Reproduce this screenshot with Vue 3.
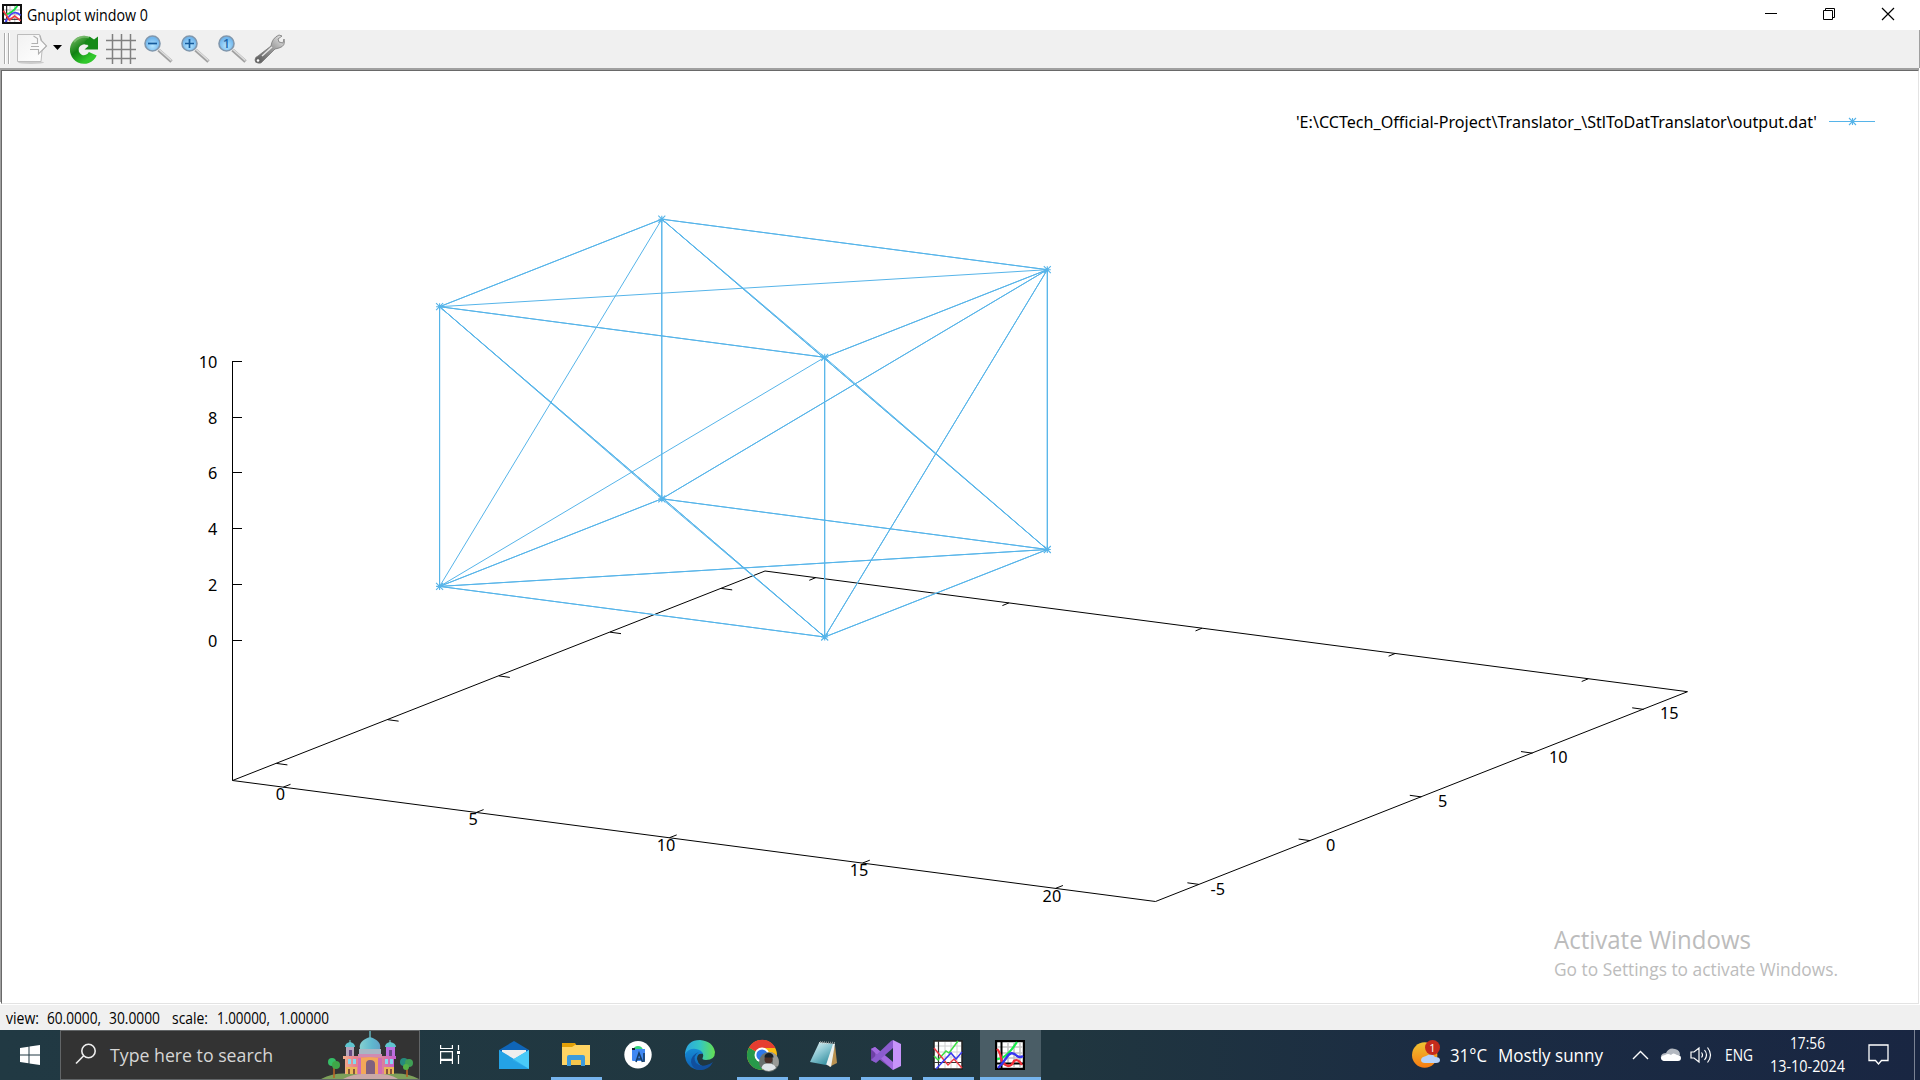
<script setup>
import { h } from 'vue'

// Single-line label with a fixed width; `base` is the baseline inside the box.
const Label = (p) =>
  h('svg', { width: p.w, height: p.h, class: 'label', style: { display: 'block', overflow: 'visible', flex: 'none' } }, [
    h('text', { x: 0, y: p.base, 'font-size': p.size, textLength: p.w, lengthAdjust: 'spacingAndGlyphs', fill: p.fill || '#000' }, p.text),
  ])
Label.props = ['w', 'h', 'base', 'size', 'fill', 'text']

const V = {
  L: [439.6, 306.7], B: [661.8, 219.2], R: [1047.3, 269.7], F: [824.7, 357.3],
  l: [439.6, 586.4], b: [661.8, 498.8], r: [1047.3, 549.5], f: [824.7, 637],
}
const twice = ['LB', 'BR', 'LF', 'RF', 'lb', 'br', 'lf', 'rf', 'lr', 'Ll', 'Bb', 'Rr', 'Ff', 'bR', 'Rf', 'Lf', 'Br']
const once = ['LR', 'Bl', 'lF', 'Lb', 'bf', 'BF', 'Fr']
const edges = [...twice, ...twice, ...once].map((e) => ({ a: V[e[0]], b: V[e[1]] }))
const stars = [...Object.values(V), [1852.5, 121.5]]

const zTicks = [[361.5, '10'], [417.5, '8'], [472.5, '6'], [528.5, '4'], [584.5, '2'], [640.5, '0']]
const xTicks = [0, 1, 2, 3, 4].map((i) => ({
  x: 283.3 + 193.1 * i, y: 787.1 + 25.3 * i, t: String(i * 5), lx: 280.3 + 192.9 * i, ly: 800 + 25.4 * i,
}))
const yTicks = [0, 1, 2, 3, 4].map((i) => ({
  x: 276.4 + 111.2 * i, y: 763.4 - 43.75 * i, t: String(i * 5 - 5), ly: 895.2 - 44 * i,
  lx: [1210.5, 1326, 1438, 1549, 1660][i],
}))
const status = [
  ['view:', 33, 8], ['60.0000,', 54, 8], ['30.0000', 51, 12], ['scale:', 36, 9], ['1.00000,', 53, 9], ['1.00000', 50, 0],
]
</script>

<template>
  <div class="screen">
    <header class="titlebar">
      <svg class="appicon" width="20" height="20" viewBox="0 0 30 30">
        <rect x="1.5" y="1.5" width="27" height="27" fill="#fff" stroke="#111" stroke-width="3" />
        <path d="M12 3v24M19 3v24M3 9h24M3 16h24" stroke="#ccc" stroke-width="2" />
        <path d="M7 2v26M2 23h26" stroke="#111" stroke-width="1.6" />
        <path d="M3 15Q13 17 23 3" stroke="#18dc48" stroke-width="3" fill="none" />
        <path d="M5 27Q17 5 28 17" stroke="#4545f5" stroke-width="2.6" fill="none" />
        <path d="M2 10L11 24L19 18L28 25" stroke="#f23a44" stroke-width="2.6" fill="none" />
      </svg>
      <Label text="Gnuplot window 0" :w="121" :h="30" :base="20.5" :size="16" />
      <div class="grow"></div>
      <svg width="170" height="30" fill="none" stroke="#000">
        <path d="M15 13.5h12M75.500 10.5V8.500h9v9h-2M73.500 10.500h9v9h-9z" />
        <path d="M132 8l12 12M144 8l-12 12" stroke-width="1.2" />
      </svg>
    </header>

    <div class="toolbar">
      <svg width="300" height="38" viewBox="0 30 300 38">
        <defs>
          <linearGradient id="pg" x1="0" y1="0" x2="1" y2="1"><stop offset="0" stop-color="#f2f2f2" /><stop offset="1" stop-color="#fff" /></linearGradient>
          <linearGradient id="gr" x1="0" y1="0" x2=".7" y2="1"><stop offset="0" stop-color="#5dab50" /><stop offset=".45" stop-color="#118113" /><stop offset="1" stop-color="#31c82c" /></linearGradient>
          <radialGradient id="gl" cy=".65"><stop offset="0" stop-color="#b5e5ff" /><stop offset="1" stop-color="#72b7ed" /></radialGradient>
          <linearGradient id="wr" x1="1" y1="0" x2="0" y2="1"><stop offset="0" stop-color="#eee" /><stop offset=".45" stop-color="#999" /><stop offset="1" stop-color="#555" /></linearGradient>
        </defs>
        <path d="M4.500 33v31M8.500 33v31" stroke="#aaa" /><path d="M5.500 33v31M9.500 33v31" stroke="#fff" />
        <ellipse cx="31" cy="62.500" rx="13" ry="1.500" fill="#ccc" />
        <path d="M17.500 34.500h22l1.500 6 5.500 5.500-4.500 5-1 10.500h-23.500z" fill="url(#pg)" stroke="#bcbcbc" />
        <path d="M31.500 43.500h6v-5l-4-2.500M40 35.500l1.500 5 5 5.500-8 8v-4.500h-8.500M31 46.500h8" fill="none" stroke="#b0b0b0" stroke-width="1.100" />
        <path d="M53 45h9l-4.500 5z" />
        <path d="M92.800 53.800A9.700 9.700 0 1 1 88.500 41.200" fill="none" stroke="url(#gr)" stroke-width="8.600" />
        <path d="M98 36.500V49.500H84.500l4-3.500-4-4 5-5.500 4.500 3z" fill="#158a18" />
        <path d="M74 42q6-7 15-4.500" stroke="#9ccf90" fill="none" stroke-width="2" opacity=".5" />
        <path d="M112.500 34v30M121.500 34v30M130.500 34v30M106 40.500h30M106 49.500h30M106 58.500h30" stroke="#808080" stroke-width="1.500" fill="none" />
        <g v-for="(x, i) in [152.500, 189.500, 226.500]" :key="x">
          <path :d="`M${x + 6} 50L${x + 19} 61.500`" stroke="#a0a0a0" stroke-width="3.400" />
          <path :d="`M${x + 6.600} 49.500L${x + 19} 60.500`" stroke="#dedede" stroke-width="1.600" />
          <circle :cx="x" cy="43.500" r="7.500" fill="url(#gl)" stroke="#8097ad" stroke-width="1.600" />
          <path v-if="i < 2" :d="`M${x - 4.500} 43.500h9` + (i ? `M${x} 39v9` : '')" stroke="#155a9a" stroke-width="1.700" />
          <text v-else :x="x" y="48" text-anchor="middle" font-size="12" font-weight="600" fill="#1b65a8">1</text>
        </g>
        <path d="M255 60q0-3 3-4l13-10q1-8 8-11l3 1-4 3 1 3 4 1 1-4q2 7-5 9l-4 1-12 12q-2 3-5 2-3 0-3-3z" fill="url(#wr)" stroke="#777" stroke-width=".8" />
        <path d="M262 56l10-9" stroke="#e5e5e5" stroke-width="1.500" /><circle cx="258" cy="60.500" r="1.300" fill="#fff" />
      </svg>
    </div>

    <main class="plot">
      <svg width="1916" height="932" viewBox="2 71 1916 932">
        <g class="axes" fill="none" stroke="#000">
          <path d="M232.500 361V780.500" />
          <path d="M232.500 780.500L1155.500 901.500L1687.500 691.700L765 571Z" />
          <path v-for="z in zTicks" :key="z[0]" :d="`M232 ${z[0]}h10`" />
          <template v-for="t in xTicks" :key="t.t">
            <path :d="`M${t.x} ${t.y}l7.200-2.800`" />
            <path :d="`M${t.x + 532.500} ${t.y - 209.500}l-6.500 2.700`" />
          </template>
          <template v-for="t in yTicks" :key="t.t">
            <path :d="`M${t.x} ${t.y}l11 1.500`" />
            <path :d="`M${t.x + 922.500} ${t.y + 121}l-11.500-1.600`" />
          </template>
        </g>
        <g class="ticks">
          <text v-for="z in zTicks" :key="z[1]" :x="217.300" :y="z[0] + 6.800" text-anchor="end">{{ z[1] }}</text>
          <text v-for="t in xTicks" :key="t.t" :x="t.lx" :y="t.ly" text-anchor="middle">{{ t.t }}</text>
          <text v-for="t in yTicks" :key="t.t" :x="t.lx" :y="t.ly">{{ t.t }}</text>
          <text x="1296" y="128" font-size="16.500" textLength="521" lengthAdjust="spacingAndGlyphs">'E:\CCTech_Official-Project\Translator_\StlToDatTranslator\output.dat'</text>
        </g>
        <g stroke="#56b4e9" stroke-width="1" fill="none">
          <line v-for="(e, i) in edges" :key="i" :x1="e.a[0]" :y1="e.a[1]" :x2="e.b[0]" :y2="e.b[1]" />
          <path d="M1829 121.500h46" />
          <path v-for="(s, i) in stars" :key="i" stroke-width="1.100" :d="`M${s[0] - 3.500} ${s[1]}h7m-3.500-3.500v7m-3.500-7l7 7m0-7l-7 7`" />
        </g>
        <g class="watermark">
          <text x="1554" y="948.500" font-size="25" textLength="197" lengthAdjust="spacingAndGlyphs">Activate Windows</text>
          <text x="1554" y="975.700" font-size="18.500" textLength="284" lengthAdjust="spacingAndGlyphs">Go to Settings to activate Windows.</text>
        </g>
      </svg>
    </main>

    <div class="status">
      <div v-for="(s, i) in status" :key="i" :style="{ marginRight: s[2] + 'px' }">
        <Label :text="s[0]" :w="s[1]" :h="25" :base="19.3" :size="15.500" />
      </div>
    </div>

    <footer class="taskbar">
      <div class="start"><svg width="20" height="20" fill="#fff"><path d="M0 3l8.500-1.200v7.700H0zM9.500 1.600L20 0v9.500H9.500zM0 10.500h8.500v7.700L0 17zM9.500 10.500H20V20L9.500 18.400z" /></svg></div>
      <div class="search">
        <svg class="glass" width="22" height="22" fill="none" stroke="#eee" stroke-width="1.600"><circle cx="13.500" cy="8" r="6.700" /><path d="M8.700 12.800L1 20.500" /></svg>
        <Label text="Type here to search" :w="163" :h="48" :base="31" :size="19" fill="#d6d6d6" />
        <div class="grow"></div>
        <svg width="98" height="48" viewBox="0 0 98 48">
          <defs>
            <linearGradient id="pal"><stop offset="0" stop-color="#f4b08a" /><stop offset=".25" stop-color="#e57c93" /><stop offset=".5" stop-color="#f1a45e" /><stop offset="1" stop-color="#c45ad8" /></linearGradient>
            <linearGradient id="dom"><stop offset="0" stop-color="#86d0d0" /><stop offset=".6" stop-color="#5fb8cf" /><stop offset="1" stop-color="#62a3c6" /></linearGradient>
          </defs>
          <path d="M0 48q14-7 30-5h38q16-2 30 5z" fill="#7da05a" />
          <path d="M22 25h53v3h-2v15H24V28h-2z" fill="url(#pal)" />
          <path d="M38 18h22v8H38z" fill="#a8b6c4" /><path d="M37 23h24v3H37z" fill="#d08bb2" />
          <path d="M39 18q-2-8 10-12q12 4 10 12z" fill="url(#dom)" /><path d="M49 0v7" stroke="#63b3bb" stroke-width="1.500" />
          <path d="M25 16h8v9h-8z" fill="#b7a5bd" /><path d="M65 16h9v9h-9z" fill="#bb6fe0" />
          <path d="M24 16q0-4 5-5q5 1 5 5zM64 16q0-4 5-5q6 1 6 5z" fill="#5fc5cf" /><path d="M29 9v3M69 9v3" stroke="#6cc" />
          <path d="M28 19h3v6h-3zM68 19h3v6h-3z" fill="#684b83" />
          <path d="M40 27h20v17H40z" fill="#f3a859" /><path d="M57 27h4v16h-4zM37 27h3v16h-3z" fill="#cf6cb4" />
          <path d="M45 44V33q0-4 4-4q5 0 5 4v11z" fill="#80617f" />
          <path d="M27 28h3v5h-3zM32 28h3v5h-3zM64 28h3v5h-3zM69 28h3v5h-3z" fill="#86d8ee" />
          <path d="M25 36h11v7H25zM63 36h10v7H63z" fill="#e9b758" /><path d="M27 38h2v5h-2zM32 38h2v5h-2zM65 38h2v5h-2zM69 38h2v5h-2z" fill="#87533c" />
          <path d="M22 48q10-5 19-5h18q10 0 18 5z" fill="#cba9a8" />
          <path d="M13 36v11M86 36v10" stroke="#b86525" stroke-width="1.600" />
          <circle cx="11" cy="31" r="4" fill="#36bd67" /><circle cx="15" cy="34" r="4" fill="#3fa648" />
          <circle cx="83" cy="31" r="4" fill="#268b7d" /><circle cx="88" cy="32" r="4" fill="#3f9f55" /><circle cx="85" cy="36" r="3" fill="#56b146" />
        </svg>
      </div>

      <div class="task view">
        <svg width="22" height="22" fill="none" stroke="#fff" stroke-width="1.200"><path d="M1.600 1v3.500h11.800V1M1.600 7.600h11.800v7.800H1.600zM1.600 20v-3.500h11.800V20M19.500 1v5M19.500 11v9" /><path d="M18 7h3v3h-3z" fill="#fff" stroke="none" /></svg>
      </div>
      <div class="task">
        <svg width="30" height="30">
          <path d="M0 10L15 1L30 10V16H0z" fill="#0f65b8" /><path d="M3 10h24v5L15 20L3 15z" fill="#eee" />
          <path d="M0 10l15 9L30 10v19H0z" fill="#2aa7e9" /><path d="M30 10L13 20L30 29z" fill="#49caf8" /><path d="M0 10L30 29H0z" fill="#229fe2" opacity=".7" />
        </svg>
      </div>
      <div class="task open">
        <svg width="30" height="30">
          <path d="M1 3h13l2 3v5H1z" fill="#e3a007" /><path d="M1 7h10l3-2h15v20H1z" fill="#ffd463" />
          <path d="M6 26V17q0-2 2-2h14q2 0 2 2v9h-4v-6H10v6z" fill="#3d9bdc" /><path d="M10 20h10v5H10z" fill="#f5c64d" />
        </svg>
      </div>
      <div class="task">
        <svg width="30" height="30">
          <circle cx="15" cy="14.700" r="13.700" fill="#fff" /><path d="M10 10q1-4 5-4t5 4z" fill="#35d47c" />
          <path d="M9 9h13v11q0 1-1 1H10q-1 0-1-1z" fill="#4088f2" />
          <path d="M9 8h3v2H9z" fill="#123" /><path d="M13 22L16 13l3.500 9M14 19h4M21 13v9" fill="none" stroke="#173e68" stroke-width="1.600" />
        </svg>
      </div>
      <div class="task">
        <svg width="30" height="30">
          <defs>
            <linearGradient id="ed1"><stop offset="0" stop-color="#2ba5e1" /><stop offset=".5" stop-color="#34c6c3" /><stop offset="1" stop-color="#65df50" /></linearGradient>
            <linearGradient id="ed2" x1="0" y1="0" x2="0" y2="1"><stop offset="0" stop-color="#168bd5" /><stop offset="1" stop-color="#0e5fb3" /></linearGradient>
          </defs>
          <path d="M0 13Q2 0 15 0q13 1 15 12q0 8-9 8q-5 0-3-3q1-3-2-5Q8 7 0 17z" fill="url(#ed1)" />
          <path d="M0 14Q4 8 11 9q6 1 7 5q-6-1-6 5q2 8 10 8l-2 2Q9 32 3 24q-3-4-3-10z" fill="url(#ed2)" />
          <path d="M14 12q-7 4-3 11q6 6 17-1q-4 8-13 8q-8-1-9-8q0-7 8-10z" fill="#114f9d" />
        </svg>
      </div>
      <div class="task open">
        <svg class="chrome" width="30" height="30">
          <circle cx="15" cy="15" r="15" fill="#fbbd12" /><path d="M15 15L2 7.500A15 15 0 0 0 15 30l6-11z" fill="#27994a" />
          <path d="M15 15L2 7.500A15 15 0 0 1 28.500 8H15z" fill="#e63d30" /><circle cx="15" cy="15" r="7.500" fill="#fff" /><circle cx="15" cy="15" r="5.600" fill="#3079e8" />
          <circle cx="22" cy="22" r="10" fill="#69716e" /><path d="M22 12a10 10 0 0 1 9 14l-5 1V15z" fill="#999b97" />
          <circle cx="21.500" cy="19.500" r="4" fill="#4b3029" /><path d="M17.500 17.500q0-4.500 4.500-4.500t4.500 4.500z" fill="#171f28" />
          <path d="M14.500 28q1-5 6.500-4.500 6-.5 8 4.500-7 6-14.500 0z" fill="#dfe5e8" />
        </svg>
      </div>
      <div class="task open">
        <svg width="30" height="30">
          <defs><linearGradient id="np" x1="0" y1="0" x2=".7" y2="1"><stop offset="0" stop-color="#e8f6f8" /><stop offset=".5" stop-color="#8cc7d3" /><stop offset="1" stop-color="#358f9f" /></linearGradient></defs>
          <path d="M26 5l2 18-8 4z" fill="#b99150" /><path d="M10 2l16 2-4 23-8-4z" fill="#edf1ef" />
          <path d="M10 3l14 1-7 21L1 22z" fill="url(#np)" /><path d="M11 2l15 1" stroke="#858f91" stroke-width="2" stroke-dasharray="1 1" />
        </svg>
      </div>
      <div class="task open">
        <svg width="30" height="30">
          <path d="M0 9l4-2 18 15v8L4 16v6l-4-2z" fill="#8454bd" /><path d="M0 9l4-2v15l-4-2z" fill="#6d41a6" />
          <path d="M4 7l19 16-1 7L0 9z" fill="#a36be0" /><path d="M22 0v8L5 23l-5-3L20 1z" fill="#8b5cce" /><path d="M22 0l8 4v22l-8 4z" fill="#c793fa" />
        </svg>
      </div>
      <div class="task open">
        <svg width="30" height="30" fill="none">
          <path d="M1 1h28v28H1z" fill="#fff" stroke="#222" stroke-width="1.500" /><path d="M12 2v26M18 2v26M24 2v26M2 6h26M2 12h26M2 17h26" stroke="#d0d0d0" />
          <path d="M5.500 1v28M1 22.500h28" stroke="#333" stroke-width="1.200" />
          <path d="M1 16l4 4 8-9 3 2 9-12" stroke="#3cdf43" stroke-width="1.500" /><path d="M1 8l14 17 6-6 8 9" stroke="#ed3842" stroke-width="1.500" />
          <path d="M3 29l15-16 5 6 6-7" stroke="#3838ee" stroke-width="1.500" />
        </svg>
      </div>
      <div class="task open active">
        <svg width="30" height="30" fill="none">
          <path d="M1 1h28v28H1z" fill="#fff" stroke="#000" stroke-width="2.400" /><path d="M13 2v26M19 2v26M25 2v26M2 7h26M2 13h26M2 18h26" stroke="#c5c5c5" stroke-width="1.600" />
          <path d="M6.500 1v28M1 23.500h28" stroke="#000" stroke-width="2" />
          <path d="M2 19q9 0 20-17" stroke="#13ed48" stroke-width="2.300" /><path d="M2 9q3 3 4 9t7 8q4 0 6-5 4-3 8 4" stroke="#f22f38" stroke-width="2.300" />
          <path d="M3 28q5-5 9-11q4-7 10-1 3 2 6 0" stroke="#3636f0" stroke-width="2.300" />
        </svg>
      </div>

      <div class="grow"></div>
      <svg class="weather" width="28" height="30">
        <defs><linearGradient id="sun" x1="0" y1="0" x2="0" y2="1"><stop offset="0" stop-color="#efc332" /><stop offset="1" stop-color="#f77b11" /></linearGradient></defs>
        <circle cx="12.700" cy="15" r="12.700" fill="url(#sun)" />
        <path d="M13 23q-4 0-4-3t5-4q6-4 9 1 5 0 5 3t-4 3z" fill="#b6d3fb" />
        <circle cx="20.500" cy="7.500" r="7.500" fill="#c42b1c" /><text x="20.500" y="11.500" text-anchor="middle" font-size="11" fill="#fff">1</text>
      </svg>
      <div class="temp"><Label text="31°C" :w="37" :h="50" :base="31.700" :size="18.500" fill="#fff" /></div>
      <Label text="Mostly sunny" :w="105" :h="50" :base="31.700" :size="18.500" fill="#fff" />
      <svg class="tray" width="80" height="50" fill="none" stroke="#fff">
        <path d="M1 29l7.500-7.500L16 29" stroke-width="1.400" />
        <path d="M32 31q-4-1-3-5 1-3 5-3 3-6 9-4 5 1 5 6z" fill="#b3b8c0" stroke="none" />
        <path d="M32 31q-3-1-3-3.500 1-2.500 4-2.500 3-2 6 0 2-3 6 0 4 0 4 3 0 3-3 3z" fill="#fff" stroke="none" />
        <path d="M59 22h3l5-4v14l-5-4h-3zM69.500 22.500q2 2.500 0 5M72.500 20q4 5 0 10M75.500 17.500q6 7.500 0 15" stroke-width="1.200" />
      </svg>
      <div class="lang"><Label text="ENG" :w="28" :h="50" :base="31" :size="16" fill="#fff" /></div>
      <div class="clock">
        <Label text="17:56" :w="35" :h="23" :base="19.300" :size="16" fill="#fff" />
        <Label text="13-10-2024" :w="75" :h="23" :base="19" :size="16" fill="#fff" />
      </div>
      <svg class="note" width="22" height="22" fill="none" stroke="#fff" stroke-width="1.300"><path d="M1 1h19v15.500h-6.500L10.500 20L7.500 16.500H1z" /></svg>
      <div class="peek"></div>
    </footer>
  </div>
</template>

<style>
body { margin: 0; overflow: hidden; }
</style>

<style scoped>
.screen { width: 1920px; height: 1080px; display: flex; flex-direction: column; background: #fff; font-family: "Open Sans", "Noto Sans", sans-serif; overflow: hidden; }
.grow { flex: 1; }
svg { display: block; flex: none; }
.titlebar { height: 30px; display: flex; flex: none; align-items: center; }
.appicon { margin: 0 5px 2px 2px; }
.toolbar { height: 38px; flex: none; background: #f0f0f0; border-right: 1px solid #a0a0a0; }
.plot { height: 932px; flex: none; background: #fff; border-top: 1px solid #696969; border-left: 1px solid #696969; border-right: 1px solid #e3e3e3; border-bottom: 1px solid #e3e3e3; box-sizing: content-box; margin: 2px 1px 1px 1px; box-shadow: -1px -2px 0 #a0a0a0, 0 -2px 0 #a0a0a0; }
.ticks { font-family: "Noto Sans", sans-serif; font-size: 16.3px; fill: #000; }
.watermark { fill: #bcbcbc; }
.status { height: 25px; flex: none; background: #f0f0f0; display: flex; padding-left: 6px; }
.taskbar { height: 50px; flex: none; display: flex; align-items: center; background: linear-gradient(90deg, #213943 0, #20363f 55%, #1b2c43 75%, #192642 100%); }
.start { width: 60px; height: 50px; display: flex; align-items: center; justify-content: center; }
.search { width: 358px; height: 48px; display: flex; align-items: center; background: #333; border: 1px solid #626567; }
.glass { margin: 0 13px 2px 14px; }
.task { width: 62px; height: 50px; display: flex; align-items: center; justify-content: center; box-sizing: border-box; position: relative; }
.view { width: 63px; padding-right: 4px; }
.chrome { overflow: visible; }
.open::after { content: ""; position: absolute; left: 6px; right: 5px; bottom: 0; height: 3px; background: #76b4ed; }
.active { background: #4a5d66; width: 61px; margin-left: 1px; padding-right: 1px; }
.active::after { left: 0; right: 0; }
.weather { margin-right: 10px; }
.temp { margin-right: 11px; }
.tray { margin-left: 29px; }
.lang { margin-left: 13px; }
.clock { width: 75px; height: 50px; display: flex; flex-direction: column; align-items: center; margin: 0 23px 0 17px; }
.note { margin-right: 24px; }
.peek { width: 5px; height: 50px; border-left: 1px solid #7a8293; }
</style>
